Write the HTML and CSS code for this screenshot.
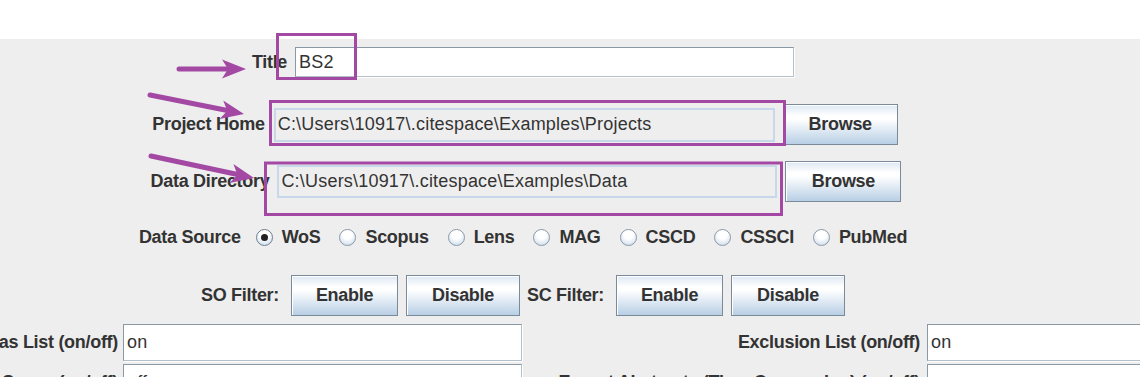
FILE: index.html
```html
<!DOCTYPE html>
<html lang="en">

<head>
    <meta charset="UTF-8">
    <meta name="viewport" content="width=device-width, initial-scale=1.0">
    <title>Project Properties</title>
    <link rel="stylesheet" href="styles.css">
</head>

<body>
    <div class="top"></div>

    <div class="panel">
        <div class="row row-title">
            <label class="lbl" for="title">Title</label>
            <input class="field" type="text" id="title" value="BS2">
        </div>

        <div class="row row-home">
            <label class="lbl">Project Home</label>
            <input class="field readonly" type="text" value="C:\Users\10917\.citespace\Examples\Projects" readonly>
            <button class="btn btn-browse">Browse</button>
        </div>

        <div class="row row-data">
            <label class="lbl">Data Directory</label>
            <input class="field readonly" type="text" value="C:\Users\10917\.citespace\Examples\Data" readonly>
            <button class="btn btn-browse">Browse</button>
        </div>

        <div class="row row-source">
            <span class="lbl source-lbl">Data Source</span>
            <span class="radio checked"><i></i>WoS</span>
            <span class="radio"><i></i>Scopus</span>
            <span class="radio"><i></i>Lens</span>
            <span class="radio"><i></i>MAG</span>
            <span class="radio"><i></i>CSCD</span>
            <span class="radio"><i></i>CSSCI</span>
            <span class="radio"><i></i>PubMed</span>
        </div>

        <div class="row row-filter">
            <span class="lbl">SO Filter:</span>
            <button class="btn btn-enable">Enable</button>
            <button class="btn btn-disable">Disable</button>
            <span class="lbl">SC Filter:</span>
            <button class="btn btn-enable">Enable</button>
            <button class="btn btn-disable">Disable</button>
        </div>

        <div class="grid">
            <label class="lbl glbl">Alias List (on/off)</label>
            <input class="field gfield" type="text" value="on">
            <label class="lbl glbl">Exclusion List (on/off)</label>
            <input class="field gfield" type="text" value="on">

            <label class="lbl glbl">Export Space (on/off)</label>
            <input class="field gfield" type="text" value="off">
            <label class="lbl glbl">Export Abstracts (Time Consuming) (on/off)</label>
            <input class="field gfield" type="text" value="on">
        </div>
    </div>

    <!-- purple markup drawn over the form -->
    <svg class="marks" width="1140" height="377" viewBox="0 0 1140 377">
        <g fill="none" stroke="#a349a4" stroke-width="3">
            <rect x="277.5" y="34.5" width="78" height="44"></rect>
            <rect x="270.5" y="101.5" width="514" height="43"></rect>
            <rect x="265.5" y="163" width="516" height="51.5"></rect>
        </g>
        <g stroke="#a349a4" stroke-width="5" stroke-linecap="round">
            <line x1="179" y1="69" x2="232" y2="69"></line>
            <line x1="150" y1="95" x2="230" y2="111"></line>
            <line x1="151" y1="156" x2="240" y2="175"></line>
        </g>
        <g fill="#a349a4">
            <polygon points="246,69 222,59.5 228,69 222,78.5"></polygon>
            <polygon points="244,114 223.2,100.5 227.3,110.8 219.6,119"></polygon>
            <polygon points="254,178 233.4,164 237.4,174.7 229.6,183"></polygon>
        </g>
    </svg>
</body>

</html>
```

FILE: styles.css
```css
html,
body {
    margin: 0;
    padding: 0;
    overflow: hidden;
    height: 377px;
}

body {
    font-family: "Liberation Sans", Arial, sans-serif;
    font-size: 18px;
    color: #333333;
    background-color: #eeeeee;
    position: relative;
}

.top {
    height: 39px;
    background-color: #fff;
}

.panel {
    width: 1606px;
    margin-left: -280px;
    padding-top: 8px;
    box-sizing: border-box;
}

.row {
    display: flex;
    justify-content: center;
    align-items: center;
}

.lbl {
    font-weight: bold;
    white-space: nowrap;
    letter-spacing: -0.3px;
}

.field {
    font-family: "Liberation Sans", Arial, sans-serif;
    font-size: 18px;
    color: #333333;
    background-color: #fff;
    border: 1px solid #8a99a6;
    border-right-color: #b4c0ca;
    border-bottom-color: #b4c0ca;
    box-shadow: inset 1px 1px 0 #fff, 1px 1px 0 #fff;
    padding: 0 3px;
    margin: 0;
    box-sizing: border-box;
    outline: none;
    letter-spacing: 0.2px;
}

.readonly {
    background-color: #eeeeee;
    border: 2px solid #c6d8ea;
    box-shadow: none;
    padding: 0 2px;
}

.btn {
    font-family: "Liberation Sans", Arial, sans-serif;
    font-size: 18px;
    font-weight: bold;
    letter-spacing: -0.3px;
    color: #333333;
    height: 41px;
    padding: 0;
    margin: 0;
    border: 1px solid #7a8a99;
    box-shadow: inset 1px 1px 0 #fff;
    background: linear-gradient(to bottom, #dde8f3 0%, #ffffff 28%, #ffffff 36%, #b8cfe5 100%);
    cursor: pointer;
}

/* title row */
.row-title {
    height: 30px;
    gap: 8px;
}

.row-title .field {
    width: 499px;
    height: 30px;
}

/* project home / data directory */
.row-home {
    margin-top: 27px;
    height: 41px;
    padding-left: 4px;
}

.row-home .lbl {
    margin-right: 9px;
}

.row-home .field {
    width: 501px;
    height: 34px;
    margin-right: 8px;
}

.row-home .btn {
    width: 115px;
}

.row-data {
    margin-top: 16px;
    height: 41px;
    padding-left: 6px;
}

.row-data .lbl {
    margin-right: 8px;
}

.row-data .field {
    width: 500px;
    height: 33px;
    margin-right: 8px;
}

.row-data .btn {
    width: 116px;
}

/* data source radios */
.row-source {
    margin-top: 19px;
    height: 32px;
}

.source-lbl {
    margin-right: 15px;
}

.radio {
    display: flex;
    align-items: center;
    font-weight: bold;
    letter-spacing: -0.3px;
    margin-right: 19px;
}

.radio:last-child {
    margin-right: 0;
}

.radio i {
    display: block;
    width: 15px;
    height: 15px;
    border: 1px solid #8a99a6;
    border-radius: 50%;
    margin-right: 9px;
    background: radial-gradient(circle at 50% 30%, #ffffff 0%, #ffffff 35%, #c3d5e8 100%);
    position: relative;
}

.radio.checked i {
    border-color: #6f7f8e;
}

.radio.checked i::after {
    content: "";
    position: absolute;
    left: 4px;
    top: 4px;
    width: 7px;
    height: 7px;
    border-radius: 50%;
    background-color: #222;
}

/* filters */
.row-filter {
    margin-top: 22px;
    height: 41px;
}

.row-filter .lbl {
    margin-right: 12px;
}

.btn-enable {
    width: 107px;
    margin-right: 8px;
}

.btn-disable {
    width: 114px;
    margin-right: 7px;
}

.row-filter .btn-disable:last-child {
    margin-right: 0;
}

/* on/off properties */
.grid {
    margin-top: 8px;
    display: grid;
    grid-template-columns: 403px 399px 405px 399px;
    grid-auto-rows: 37px;
    row-gap: 3px;
}

.glbl {
    align-self: center;
    text-align: right;
    padding-right: 5px;
}

.grid .glbl:nth-child(4n+3) {
    padding-right: 7px;
}

.gfield {
    width: 399px;
    height: 37px;
}

.marks {
    position: absolute;
    left: 0;
    top: 0;
    pointer-events: none;
}
```
